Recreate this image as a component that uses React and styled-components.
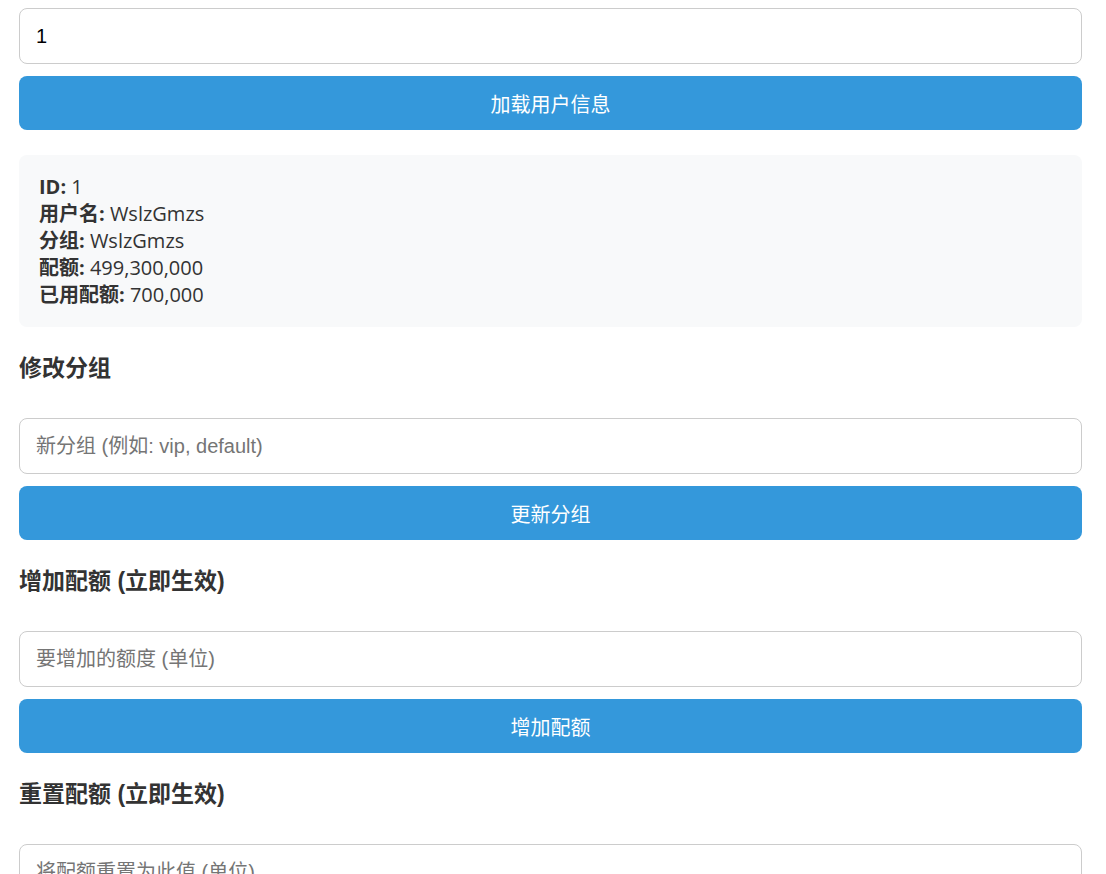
import React from "react";
import styled, { createGlobalStyle } from "styled-components";

const Global = createGlobalStyle`
  html, body { margin: 0; padding: 0; background: #fff; }
  body { font-family: "Open Sans", "Noto Sans CJK SC", sans-serif; color: #333; }
`;

const Page = styled.div`
  padding: 8px 24px 40px 19px;
  display: flex;
  flex-direction: column;
`;

const Input = styled.input`
  box-sizing: border-box;
  width: 100%;
  height: 56px;
  padding: 0 16px;
  border: 1px solid #ccc;
  border-radius: 8px;
  font-family: "Liberation Sans", Arial, "Noto Sans CJK SC", sans-serif;
  font-size: 20px;
  color: #000;
  background: #fff;
  outline: none;
  &::placeholder { color: #757575; }
`;

const Button = styled.button`
  box-sizing: border-box;
  width: 100%;
  height: 54px;
  margin-top: 12px;
  border: none;
  border-radius: 8px;
  background: #3498db;
  color: #fff;
  font-family: "Liberation Sans", Arial, "Noto Sans CJK SC", sans-serif;
  font-size: 20px;
  cursor: pointer;
`;

const Info = styled.div`
  margin-top: 25px;
  padding: 18px 20px 19px;
  background: #f8f9fa;
  border-radius: 8px;
  font-size: 20px;
  line-height: 27px;
  color: #333;
`;

const Line = styled.div``;

const Label = styled.strong`
  font-weight: 700;
`;

const Heading = styled.h3`
  margin: 28px 0 37px;
  font-family: "Liberation Sans", Arial, "Noto Sans CJK SC", sans-serif;
  font-size: 23px;
  line-height: 26px;
  font-weight: 700;
  color: #333;
`;

const Section = ({ title, placeholder, action }) => (
  <>
    <Heading>{title}</Heading>
    <Input placeholder={placeholder} />
    <Button>{action}</Button>
  </>
);

export default function App() {
  return (
    <>
      <Global />
      <Page>
        <Input defaultValue="1" />
        <Button>加载用户信息</Button>
        <Info>
          <Line><Label>ID:</Label> 1</Line>
          <Line><Label>用户名:</Label> WslzGmzs</Line>
          <Line><Label>分组:</Label> WslzGmzs</Line>
          <Line><Label>配额:</Label> 499,300,000</Line>
          <Line><Label>已用配额:</Label> 700,000</Line>
        </Info>
        <Section title="修改分组" placeholder="新分组 (例如: vip, default)" action="更新分组" />
        <Section title="增加配额 (立即生效)" placeholder="要增加的额度 (单位)" action="增加配额" />
        <Section title="重置配额 (立即生效)" placeholder="将配额重置为此值 (单位)" action="重置配额" />
      </Page>
    </>
  );
}
